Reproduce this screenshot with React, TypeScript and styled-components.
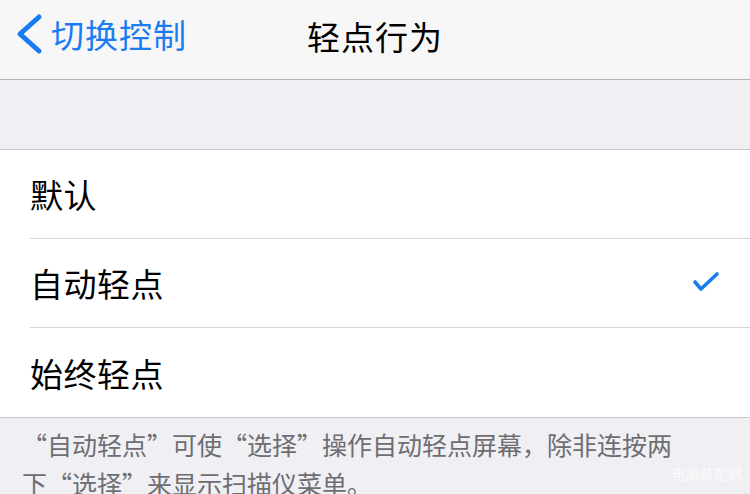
import React from 'react';
import styled, { createGlobalStyle } from 'styled-components';

const GlobalStyle = createGlobalStyle`
  html, body {
    margin: 0;
    padding: 0;
    background: #efeff4;
  }
  body {
    font-family: "Noto Sans CJK SC", "Noto Sans", sans-serif;
  }
`;

const options = [
  { label: '默认', checked: false },
  { label: '自动轻点', checked: true },
  { label: '始终轻点', checked: false },
];

const App = () => {
  return (
    <>
      <GlobalStyle />
      <Page>
        <NavBar>
          <BackButton>
            <svg width="30" height="46" viewBox="0 0 30 46">
              <polyline
                points="24,6 5,23 24,40"
                fill="none"
                stroke="#1a7cf2"
                strokeWidth="5"
                strokeLinecap="round"
                strokeLinejoin="round"
              />
            </svg>
            <BackText>切换控制</BackText>
          </BackButton>
          <Title>轻点行为</Title>
        </NavBar>
        <Spacer />
        <List>
          {options.map((o, i) => (
            <Row key={o.label} last={i === options.length - 1}>
              <RowLabel>{o.label}</RowLabel>
              {o.checked && (
                <svg width="28" height="24" viewBox="0 0 28 24">
                  <polyline
                    points="3,11 9,18 25,3"
                    fill="none"
                    stroke="#1a7cf2"
                    strokeWidth="3.6"
                    strokeLinecap="round"
                    strokeLinejoin="round"
                  />
                </svg>
              )}
            </Row>
          ))}
        </List>
        <Footer>
          “自动轻点”可使“选择”操作自动轻点屏幕，除非连按两下“选择”来显示扫描仪菜单。
          <Watermark>电脑装配网</Watermark>
        </Footer>
      </Page>
    </>
  );
};

export default App;

const Page = styled.div`
  width: 750px;
  height: 494px;
  overflow: hidden;
  background: #efeff4;
  position: relative;
`;

const NavBar = styled.div`
  height: 79px;
  background: #f7f7f8;
  border-bottom: 1px solid #b4b4b6;
  display: flex;
  align-items: center;
  justify-content: center;
  position: relative;
`;

const BackButton = styled.div`
  position: absolute;
  left: 15px;
  top: 11px;
  display: flex;
  align-items: center;
  gap: 6px;
  color: #1a7cf2;
`;

const BackText = styled.span`
  font-size: 33px;
  line-height: 46px;
  letter-spacing: 1px;
`;

const Title = styled.div`
  font-size: 33px;
  line-height: 46px;
  margin-top: -8px;
  color: #000;
  letter-spacing: 1px;
`;

const Spacer = styled.div`
  height: 69px;
  border-bottom: 1px solid #c8c7cc;
`;

const List = styled.div`
  background: #fff;
  border-bottom: 1px solid #c8c7cc;
`;

const Row = styled.div<{ last: boolean }>`
  height: ${(p) => (p.last ? 89 : 88)}px;
  margin-left: 30px;
  padding-right: 30px;
  display: flex;
  align-items: center;
  justify-content: space-between;
  border-bottom: ${(p) => (p.last ? 'none' : '1px solid #d6d6da')};
`;

const RowLabel = styled.span`
  font-size: 33px;
  color: #000;
  letter-spacing: 0.5px;
`;

const Footer = styled.div`
  padding: 7px 56px 0 22px;
  font-size: 25px;
  line-height: 39px;
  color: #6d6d72;
  position: relative;
`;

const Watermark = styled.span`
  position: absolute;
  right: 8px;
  top: 36px;
  font-size: 14px;
  color: rgba(255, 255, 255, 0.7);
`;
